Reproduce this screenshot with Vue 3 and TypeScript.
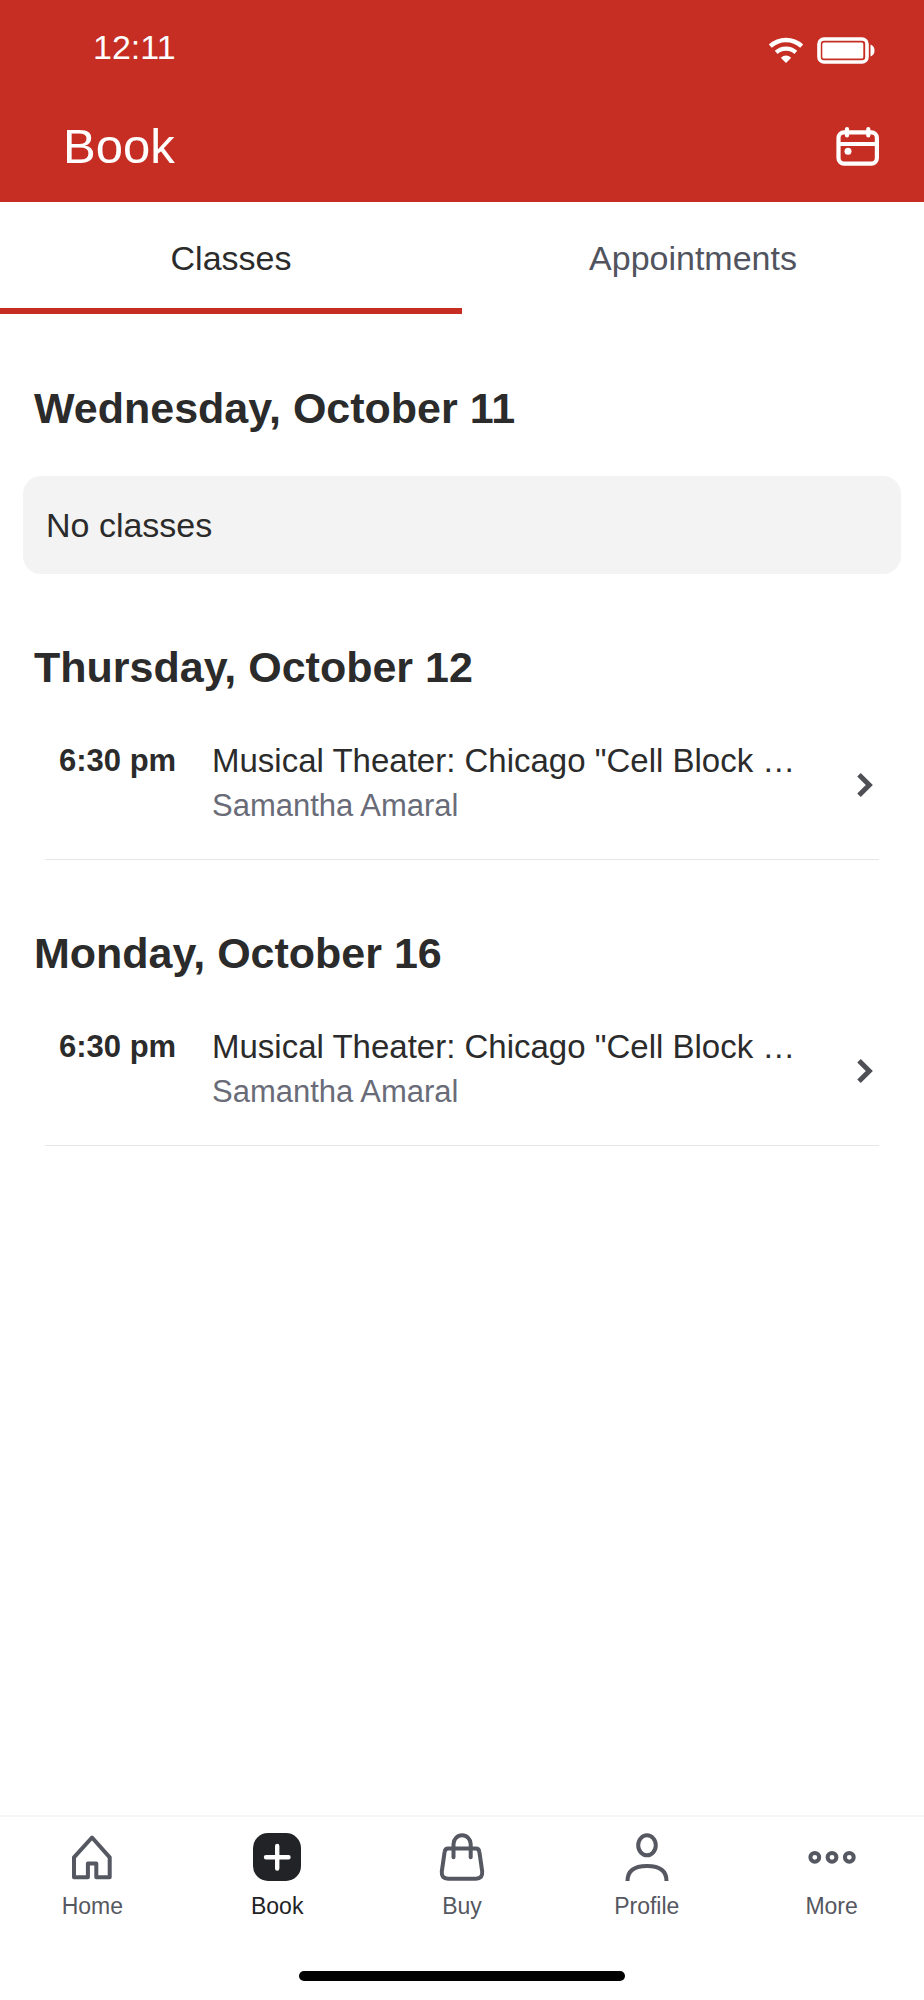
<script setup lang="ts">
import { ref } from 'vue'

type Tab = 'Classes' | 'Appointments'

interface ClassItem {
  time: string
  title: string
  instructor: string
}

interface Day {
  date: string
  classes: ClassItem[]
}

const tabs: Tab[] = ['Classes', 'Appointments']
const activeTab = ref<Tab>('Classes')

const theater: ClassItem = {
  time: '6:30 pm',
  title: 'Musical Theater: Chicago "Cell Block …',
  instructor: 'Samantha Amaral',
}

const days: Day[] = [
  { date: 'Wednesday, October 11', classes: [] },
  { date: 'Thursday, October 12', classes: [theater] },
  { date: 'Monday, October 16', classes: [theater] },
]

const navItems = ['Home', 'Book', 'Buy', 'Profile', 'More']
const activeNav = ref('Book')
</script>

<template>
  <div class="screen">
    <header class="header">
      <div class="status">
        <span class="clock">12:11</span>
        <div class="status-icons">
          <svg width="36" height="27" viewBox="0 0 36 27" fill="none" stroke="currentColor" aria-hidden="true">
            <path d="M2.3 9.2A23 23 0 0 1 33.7 9.2" stroke-width="4.4" />
            <path d="M8.2 15.4A14.5 14.5 0 0 1 27.8 15.4" stroke-width="4.2" />
            <path d="M18 26L12.8 20.8Q18 16.2 23.2 20.8Z" fill="currentColor" stroke="none" />
          </svg>
          <svg width="58" height="27" viewBox="0 0 58 27" fill="none" aria-hidden="true">
            <rect x="2" y="2" width="48" height="23" rx="5" stroke="currentColor" stroke-width="3.6" />
            <rect x="5.3" y="5.5" width="41" height="16" rx="1.5" fill="currentColor" />
            <path d="M53.5 7.5Q57.5 9 57.5 13.5T53.5 19.5Z" fill="currentColor" />
          </svg>
        </div>
      </div>
      <div class="title-row">
        <h1 class="title">Book</h1>
        <button class="calendar" type="button" aria-label="Choose a date">
          <svg width="44" height="40" viewBox="0 0 44 40" fill="none" stroke="currentColor" stroke-width="4.2" stroke-linecap="round" aria-hidden="true">
            <rect x="2.5" y="6.3" width="38.4" height="31.3" rx="5.5" />
            <path d="M3 18H40.5" stroke-linecap="butt" />
            <path d="M11 3V9.5M32.3 3V9.5" />
            <circle cx="12" cy="25.3" r="3.5" fill="currentColor" stroke="none" />
          </svg>
        </button>
      </div>
    </header>

    <div class="tabs" role="tablist">
      <button
        v-for="tab in tabs"
        :key="tab"
        class="tab"
        :class="{ active: tab === activeTab }"
        type="button"
        role="tab"
        :aria-selected="tab === activeTab"
        @click="activeTab = tab"
      >
        {{ tab }}
      </button>
    </div>

    <main class="schedule">
      <section v-for="day in days" :key="day.date" class="day">
        <h2 class="date">{{ day.date }}</h2>
        <p v-if="day.classes.length === 0" class="empty">No classes</p>
        <button v-for="item in day.classes" :key="item.time" class="class-row" type="button">
          <span class="time">{{ item.time }}</span>
          <span class="details">
            <span class="class-title">{{ item.title }}</span>
            <span class="instructor">{{ item.instructor }}</span>
          </span>
          <svg class="chevron" width="16" height="24" viewBox="0 0 16 24" fill="none" stroke="currentColor" stroke-width="5" aria-hidden="true">
            <path d="M2 1.8L12.3 12L2 22.2" />
          </svg>
        </button>
      </section>
    </main>

    <nav class="nav">
      <a
        v-for="item in navItems"
        :key="item"
        class="nav-item"
        :class="{ active: item === activeNav }"
        href="#"
        :aria-current="item === activeNav ? 'page' : undefined"
        @click.prevent="activeNav = item"
      >
        <svg width="48" height="48" viewBox="0 0 48 48" fill="none" stroke="currentColor" stroke-width="4" aria-hidden="true">
          <path v-if="item === 'Home'" d="M24 4.5L41.7 24.3V44.3H28.3V30.5H19.9V44.3H6V24.3Z" stroke-linejoin="round" />
          <template v-else-if="item === 'Book'">
            <rect width="48" height="48" rx="15" fill="currentColor" stroke="none" />
            <path d="M13 24.3H35.5M24.2 13V35.5" stroke="#fff" stroke-width="4.4" stroke-linecap="round" />
          </template>
          <template v-else-if="item === 'Buy'">
            <path d="M10.2 15.6H37.8Q41 15.6 41.4 19L44.2 38.5Q44.8 45.7 38 45.7H10Q3.2 45.7 3.8 38.5L6.6 19Q7 15.6 10.2 15.6Z" />
            <path d="M15.5 24.3V11A8.6 8.7 0 0 1 32.7 11V24.3" stroke-linecap="round" />
          </template>
          <template v-else-if="item === 'Profile'">
            <ellipse cx="24" cy="12.3" rx="8.8" ry="10" />
            <path d="M4.5 48C4.5 37.5 12 33 24 33S43.5 37.5 43.5 48" />
          </template>
          <template v-else>
            <circle cx="6.8" cy="24.3" r="4.4" />
            <circle cx="24" cy="24.3" r="4.4" />
            <circle cx="41.3" cy="24.3" r="4.4" />
          </template>
        </svg>
        <span class="nav-label">{{ item }}</span>
      </a>
    </nav>
    <div class="home-bar"></div>
  </div>
</template>

<style>
body {
  margin: 0;
  background: #fff;
}
</style>

<style scoped>
.screen {
  display: flex;
  flex-direction: column;
  min-height: 100vh;
  background: #fff;
  color: #2b2b2b;
  font-family: 'Liberation Sans', Arial, sans-serif;
}

button {
  margin: 0;
  padding: 0;
  border: 0;
  background: none;
  color: inherit;
  font: inherit;
  cursor: pointer;
}

svg {
  display: block;
  flex: none;
}

.header {
  padding: 25px 44px 26px 63px;
  background: #c62e24;
  color: #fff;
}

.status {
  display: flex;
  justify-content: space-between;
  align-items: flex-start;
  padding: 0 5px 0 30px;
}

.clock {
  font-size: 34px;
  line-height: 44px;
}

.status-icons {
  display: flex;
  gap: 13px;
  padding-top: 12px;
}

.title-row {
  display: flex;
  justify-content: space-between;
  align-items: center;
  margin-top: 47px;
}

.title {
  margin: 0;
  font-size: 49px;
  font-weight: 400;
  line-height: 60px;
}

.tabs {
  display: flex;
}

.tab {
  flex: 1;
  padding: 34px 0 28px;
  border-bottom: 6px solid transparent;
  color: #51545e;
  font-size: 34px;
  line-height: 44px;
}

.tab.active {
  border-color: #c62e24;
  color: #2b2b2b;
}

.schedule {
  display: flex;
  flex-direction: column;
  padding: 68px 23px 67px;
}

.day + .day {
  margin-top: 67px;
}

.date {
  margin: 0 11px 18px;
  font-size: 43px;
  font-weight: 700;
  line-height: 52px;
}

.empty {
  margin: 42px 0 0;
  padding: 27px 23px;
  border-radius: 18px;
  background: #f3f3f3;
  font-size: 34px;
  line-height: 44px;
}

.class-row {
  display: flex;
  box-sizing: border-box;
  width: calc(100% - 44px);
  margin: 0 22px;
  padding: 0 6px 0 14px;
  border-bottom: 1px solid #e6e6e6;
  text-align: left;
  line-height: 44px;
}

.time {
  flex: none;
  width: 153px;
  padding-top: 28px;
  font-size: 31px;
  font-weight: 700;
}

.details {
  display: flex;
  flex: 1;
  flex-direction: column;
  min-width: 0;
  padding: 28px 0 30px;
}

.class-title {
  overflow: hidden;
  font-size: 33px;
  text-overflow: ellipsis;
  white-space: nowrap;
}

.instructor {
  color: #696c78;
  font-size: 31px;
  line-height: 46px;
}

.chevron {
  align-self: center;
  margin-left: 56px;
  color: #4f5056;
}

.nav {
  display: grid;
  grid-template-columns: repeat(5, 1fr);
  margin-top: auto;
  padding: 16px 0 51px;
  border-top: 2px solid #f6f6f6;
}

.nav-item {
  display: flex;
  flex-direction: column;
  align-items: center;
  gap: 11px;
  color: #555761;
  text-decoration: none;
}

.nav-item.active {
  color: #222326;
}

.nav-label {
  font-size: 23px;
  line-height: 28px;
}

.home-bar {
  align-self: center;
  width: 326px;
  height: 10px;
  margin-bottom: 19px;
  border-radius: 5px;
  background: #000;
}
</style>
